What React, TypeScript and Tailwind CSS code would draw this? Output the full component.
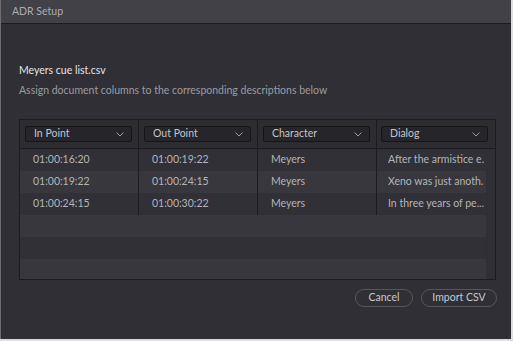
import { ReactNode } from 'react'

const columns = ['In Point', 'Out Point', 'Character', 'Dialog']

const rows = [
  ['01:00:16:20', '01:00:19:22', 'Meyers', 'After the armistice e.'],
  ['01:00:19:22', '01:00:24:15', 'Meyers', 'Xeno was just anoth.'],
  ['01:00:24:15', '01:00:30:22', 'Meyers', 'In three years of pe...'],
]

function Chevron() {
  return (
    <svg width="8" height="5" viewBox="0 0 8 5" className="shrink-0">
      <path d="M0.5 0.5 L4 4 L7.5 0.5" fill="none" stroke="#9c9ca2" strokeWidth="1" />
    </svg>
  )
}

function Cell({ last, children, className }: { last?: boolean; children?: ReactNode; className?: string }) {
  return (
    <div
      className={
        (last ? 'w-[108px] ' : 'w-[119px] border-r border-[#1c1c20] ') +
        'h-full flex items-center shrink-0 ' +
        (className ?? '')
      }
    >
      {children}
    </div>
  )
}

export default function App() {
  return (
    <div className="w-[513px] h-[341px] bg-[#dcdcdc] font-['Lato',sans-serif]">
      <div className="w-[511px] h-[339px] flex flex-col bg-[#2f2f35] border-l border-[#6e6e72]">
        <div className="h-[24px] shrink-0 flex items-center px-[11px] bg-[#414147] border-b border-[#1c1c20] text-[10.5px] text-[#acacb0]">
          ADR Setup
        </div>

        <div className="flex flex-col pl-[18px] pt-[39px]">
          <span className="text-[10.5px] leading-[14px] text-[#e4e4e6]">Meyers cue list.csv</span>
          <span className="mt-[6px] text-[10.5px] leading-[14px] text-[#9c9ca0]">
            Assign document columns to the corresponding descriptions below
          </span>

          <div className="mt-[22px] w-[477px] h-[161px] border border-[#1c1c20] flex flex-col">
            <div className="h-[29px] shrink-0 flex border-b border-[#1c1c20] bg-[#2c2c31]">
              {columns.map((c, i) => (
                <div
                  key={c}
                  className={
                    (i === 3 ? 'flex-1 pl-[4px] ' : 'w-[119px] pl-[5px] border-r border-[#1c1c20] ') +
                    'h-full flex items-center shrink-0'
                  }
                >
                  <div className="w-[107px] h-[16px] flex items-center justify-between pl-[8px] pr-[7px] bg-[#25252a] border border-[#151518] rounded-[2px] text-[10.5px] text-[#c4c4c8]">
                    <span>{c}</span>
                    <Chevron />
                  </div>
                </div>
              ))}
            </div>

            <div className="flex-1 flex">
              <div className="w-[466px] flex flex-col">
                {rows.map((r, ri) => (
                  <div
                    key={ri}
                    className={
                      'h-[22px] flex text-[10.5px] text-[#b4b4b8] ' +
                      (ri % 2 === 1 ? 'bg-[#37373d]' : 'bg-[#303036]')
                    }
                  >
                    <Cell className="pl-[13px]">{r[0]}</Cell>
                    <Cell className="pl-[13px]">{r[1]}</Cell>
                    <Cell className="pl-[13px]">{r[2]}</Cell>
                    <Cell last className="pl-[11px] whitespace-nowrap">
                      {r[3]}
                    </Cell>
                  </div>
                ))}
                <div className="h-[22px] bg-[#37373d]" />
                <div className="h-[22px] bg-[#303036]" />
                <div className="flex-1 bg-[#37373d]" />
              </div>
              <div className="flex-1 bg-[#2f2f35]" />
            </div>
          </div>

          <div className="w-[478px] mt-[9px] flex justify-end gap-[8px]">
            <button className="w-[58px] h-[18px] rounded-full border border-[#56565c] text-[10.5px] text-[#c8c8cc] flex items-center justify-center">
              Cancel
            </button>
            <button className="w-[76px] h-[18px] rounded-full border border-[#56565c] text-[10.5px] text-[#c8c8cc] flex items-center justify-center">
              Import CSV
            </button>
          </div>
        </div>
      </div>
    </div>
  )
}
